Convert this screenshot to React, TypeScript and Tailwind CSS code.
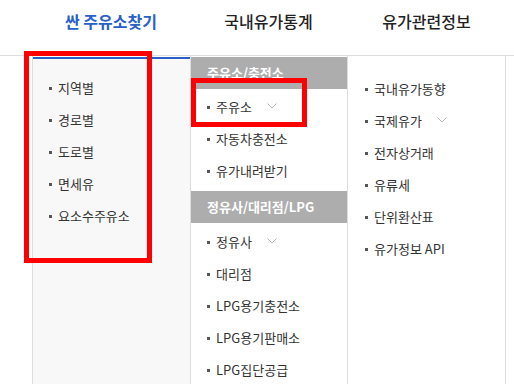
import React from "react";

const font = { fontFamily: '"Noto Sans CJK KR", "Noto Sans", sans-serif' };

const Chevron = () => (
  <svg width="10" height="6" viewBox="0 0 10 6" className="ml-[15px] -mt-[3px]" fill="none">
    <path d="M0.5 0.5 L5 5 L9.5 0.5" stroke="#b8b8b8" strokeWidth="1" />
  </svg>
);

const Item = ({ label, more }: { label: string; more?: boolean }) => (
  <li className="flex h-8 items-center text-[13px] text-[#333]">
    <span className="mr-[6px] h-[3px] w-[3px] shrink-0 bg-[#555]" />
    <span>{label}</span>
    {more && <Chevron />}
  </li>
);

const GroupHead = ({ title }: { title: string }) => (
  <div className="flex h-8 items-center bg-[#adadad] pl-4 text-[13px] font-bold text-white">
    {title}
  </div>
);

export default function App() {
  return (
    <div className="relative h-[384px] w-[514px] overflow-hidden bg-white" style={font}>
      <nav className="h-[56px] border-b border-[#dddddd]">
        <div className="ml-[32px] grid w-[474px] grid-cols-[158px_157px_159px] pt-[10px]">
          <div className="text-center text-[16px] font-bold leading-[22px] text-[#2860c6]">싼 주유소찾기</div>
          <div className="text-center text-[16px] font-medium leading-[22px] text-[#222]">국내유가통계</div>
          <div className="text-center text-[16px] font-medium leading-[22px] text-[#222]">유가관련정보</div>
        </div>
      </nav>

      <div className="ml-[32px] grid h-[328px] w-[474px] grid-cols-[158px_157px_159px]">
        <div className="border-l border-[#dddddd] pt-px">
          <ul className="h-full border-t-2 border-[#2860c6] bg-[#f8f8f8] pl-4 pt-[13px]">
            <Item label="지역별" />
            <Item label="경로별" />
            <Item label="도로별" />
            <Item label="면세유" />
            <Item label="요소수주유소" />
          </ul>
        </div>

        <div className="border-l border-[#dddddd] pt-px">
          <GroupHead title="주유소/충전소" />
          <ul className="pb-[4px] pl-4 pt-[2px]">
            <Item label="주유소" more />
            <Item label="자동차충전소" />
            <Item label="유가내려받기" />
          </ul>
          <GroupHead title="정유사/대리점/LPG" />
          <ul className="pl-4 pt-[3px]">
            <Item label="정유사" more />
            <Item label="대리점" />
            <Item label="LPG용기충전소" />
            <Item label="LPG용기판매소" />
            <Item label="LPG집단공급" />
          </ul>
        </div>

        <div className="border-x border-[#dddddd] pt-px">
          <ul className="pl-[17px] pt-[16px]">
            <Item label="국내유가동향" />
            <Item label="국제유가" more />
            <Item label="전자상거래" />
            <Item label="유류세" />
            <Item label="단위환산표" />
            <Item label="유가정보 API" />
          </ul>
        </div>
      </div>

      {/* annotation boxes */}
      <div className="absolute left-[24px] top-[51px] h-[212px] w-[128px] border-[5px] border-[#ff0000]" />
      <div className="absolute left-[191px] top-[78px] h-[49px] w-[116px] border-[5px] border-[#ff0000]" />
    </div>
  );
}
